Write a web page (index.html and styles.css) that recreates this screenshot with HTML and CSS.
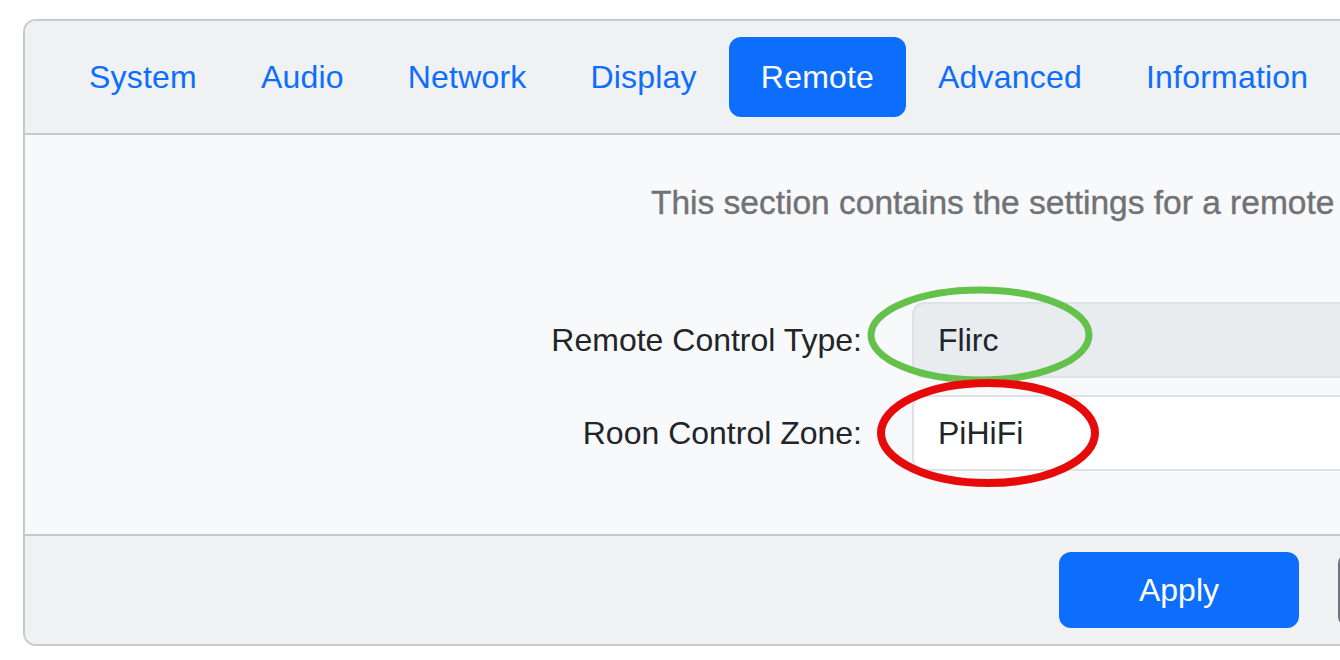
FILE: index.html
```html
<!DOCTYPE html>
<html>
    <head>
        <meta charset="utf-8" />
        <title>Settings - Remote</title>
        <meta name="viewport" content="width=device-width, initial-scale=1" />
        <link rel="stylesheet" href="styles.css">
    </head>

    <body>
        <div class="page">
            <div class="card">
                <div class="card-header">
                    <ul class="nav-pills">
                        <li><a class="nav-link" href="#">System</a></li>
                        <li><a class="nav-link" href="#">Audio</a></li>
                        <li><a class="nav-link" href="#">Network</a></li>
                        <li><a class="nav-link" href="#">Display</a></li>
                        <li><a class="nav-link active" href="#">Remote</a></li>
                        <li><a class="nav-link" href="#">Advanced</a></li>
                        <li><a class="nav-link" href="#">Information</a></li>
                    </ul>
                </div>

                <div class="card-body">
                    <p class="section-info">This section contains the settings for a remote</p>

                    <form class="settings-form">
                        <label for="remote-type">Remote Control Type:</label>
                        <input id="remote-type" type="text" value="Flirc" disabled />

                        <label for="roon-zone">Roon Control Zone:</label>
                        <input id="roon-zone" type="text" value="PiHiFi" />
                    </form>
                </div>

                <div class="card-footer">
                    <button class="btn btn-primary" type="button">Apply</button>
                    <button class="btn btn-outline" type="button" aria-label="Cancel"></button>
                </div>
            </div>

            <!-- annotation circles drawn over the form -->
            <svg class="annotations" width="1340" height="660" viewBox="0 0 1340 660">
                <ellipse cx="980" cy="335" rx="109" ry="45" fill="none" stroke="#64c14c" stroke-width="7" />
                <ellipse cx="988" cy="433" rx="107" ry="50" fill="none" stroke="#e60a0a" stroke-width="8" />
            </svg>
        </div>
    </body>
</html>
```

FILE: styles.css
```css
html,
body {
    font-family: 'Liberation Sans', Arial, sans-serif;
    padding: 0;
    margin: 0;
    --primary: #0d6efd;
    --border-color: #c8c9cb;
    --header-bg: #f0f1f3;
    --body-bg: #f8f9fa;
    --text-color: #212529;

    background: #fff;
    color: var(--text-color);
    font-size: 32px;
    overflow: hidden;
}

.page {
    position: relative;
    width: 1340px;
    height: 660px;
    overflow: hidden;
}

.card {
    width: 2200px;
    margin: 19px 0 0 23px;
    border: 2px solid var(--border-color);
    border-radius: 13px;
    overflow: hidden;
}

.card-header {
    background: var(--header-bg);
    padding: 16px 32px;
    border-bottom: 2px solid var(--border-color);
}

.nav-pills {
    display: flex;
    list-style: none;
    margin: 0;
    padding: 0;
}

.nav-link {
    display: block;
    padding: 16px 32px;
    line-height: 48px;
    letter-spacing: 0.2px;
    color: var(--primary);
    text-decoration: none;
    border-radius: 12px;
}

.nav-link.active {
    background: var(--primary);
    color: #fff;
}

.card-body {
    background: var(--body-bg);
    padding: 44px 0 63px;
}

.section-info {
    margin: 0 0 75px 626px;
    line-height: 48px;
    font-size: 33.5px;
    color: #707275;
    white-space: nowrap;
    -webkit-text-stroke: 0.4px #707275;
}

.settings-form {
    display: grid;
    grid-template-columns: 837px 1fr;
    column-gap: 50px;
    row-gap: 17px;
    align-items: center;
}

.settings-form label {
    text-align: right;
    line-height: 48px;
}

.settings-form input {
    font: inherit;
    color: var(--text-color);
    line-height: 48px;
    padding: 12px 24px;
    border: 2px solid #dee2e6;
    border-radius: 12px;
    background: #fff;
    width: 100%;
    box-sizing: border-box;
}

.settings-form input:disabled {
    background: #e9ecef;
    opacity: 1;
}

.card-footer {
    display: flex;
    gap: 39px;
    background: var(--header-bg);
    border-top: 2px solid var(--border-color);
    padding: 16px 0 16px 1034px;
}

.btn {
    font: inherit;
    line-height: 48px;
    height: 76px;
    padding: 12px 0;
    width: 240px;
    border: 2px solid transparent;
    border-radius: 12px;
    cursor: pointer;
}

.btn-primary {
    background: var(--primary);
    border-color: var(--primary);
    color: #fff;
}

.btn-outline {
    background: transparent;
    border-color: #6c757d;
    color: #6c757d;
}

.annotations {
    position: absolute;
    top: 0;
    left: 0;
    pointer-events: none;
}
```
